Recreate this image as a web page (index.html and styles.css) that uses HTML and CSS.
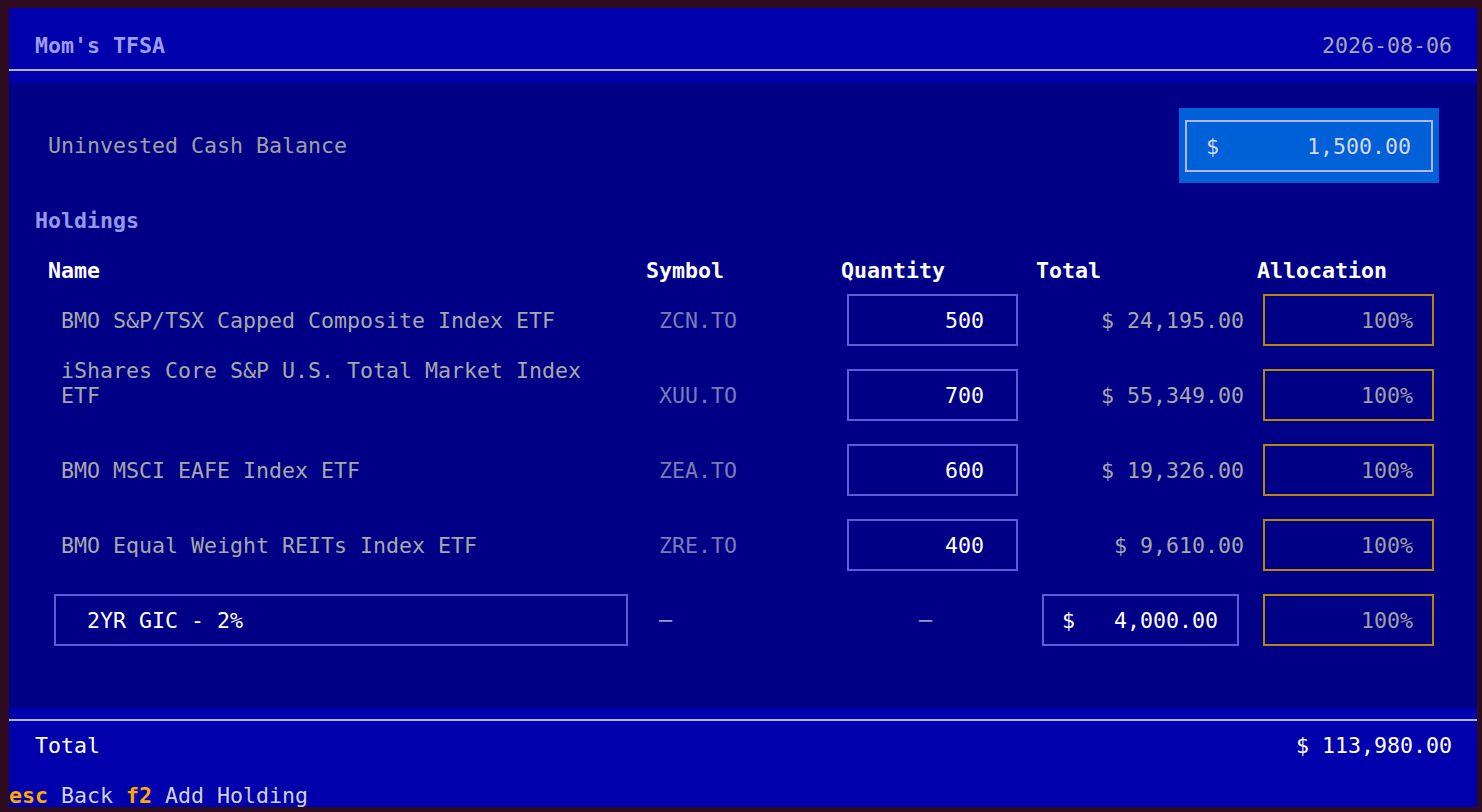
FILE: index.html
```html
<!DOCTYPE html>
<html>
<head>
<meta charset="utf-8">
<title>Mom's TFSA</title>
<link rel="stylesheet" href="styles.css">
</head>
<body>
<div class="app">
  <div class="top">
    <div class="bar-row">
      <span class="title">Mom's TFSA</span>
      <span class="date">2026-08-06</span>
    </div>
    <div class="rule"></div>
  </div>

  <div class="main">
    <div class="cash">
      <span class="cash-label">Uninvested Cash Balance</span>
      <div class="cash-field">
        <div class="box box-cash"><span>$</span><span>1,500.00</span></div>
      </div>
    </div>

    <div class="section">Holdings</div>

    <div class="table">
      <div class="row head">
        <div>Name</div>
        <div>Symbol</div>
        <div>Quantity</div>
        <div>Total</div>
        <div>Allocation</div>
      </div>

      <div class="row">
        <div class="c-name">BMO S&amp;P/TSX Capped Composite Index ETF</div>
        <div class="c-sym">ZCN.TO</div>
        <div><div class="box box-qty">500</div></div>
        <div class="c-total">$ 24,195.00</div>
        <div><div class="box box-alloc">100%</div></div>
      </div>

      <div class="row">
        <div class="c-name two-line">iShares Core S&amp;P U.S. Total Market Index ETF</div>
        <div class="c-sym">XUU.TO</div>
        <div><div class="box box-qty">700</div></div>
        <div class="c-total">$ 55,349.00</div>
        <div><div class="box box-alloc">100%</div></div>
      </div>

      <div class="row">
        <div class="c-name">BMO MSCI EAFE Index ETF</div>
        <div class="c-sym">ZEA.TO</div>
        <div><div class="box box-qty">600</div></div>
        <div class="c-total">$ 19,326.00</div>
        <div><div class="box box-alloc">100%</div></div>
      </div>

      <div class="row">
        <div class="c-name">BMO Equal Weight REITs Index ETF</div>
        <div class="c-sym">ZRE.TO</div>
        <div><div class="box box-qty">400</div></div>
        <div class="c-total">$ 9,610.00</div>
        <div><div class="box box-alloc">100%</div></div>
      </div>

      <!-- cash-like holding: name and total are editable -->
      <div class="row">
        <div><div class="box box-name">2YR GIC - 2%</div></div>
        <div class="c-sym c-dash">─</div>
        <div class="c-dash c-dash-qty">─</div>
        <div><div class="box box-money"><span>$</span><span>4,000.00</span></div></div>
        <div><div class="box box-alloc">100%</div></div>
      </div>
    </div>
  </div>

  <div class="bottom">
    <div class="rule"></div>
    <div class="bar-row sum">
      <span>Total</span>
      <span>$ 113,980.00</span>
    </div>
    <div class="blank"></div>
    <div class="keys"><b class="key">esc</b> Back <b class="key">f2</b> Add Holding</div>
  </div>
</div>
</body>
</html>
```

FILE: styles.css
```css
*{box-sizing:border-box;}
html,body{margin:0;height:812px;overflow:hidden;}
body{background:#2e0b1e;font-family:"DejaVu Sans Mono","Liberation Mono",monospace;font-size:21.6px;line-height:25px;color:#a8a8a8;padding:8px 0 0 9px;}

.app {width:1468px;height:799px;display:flex;flex-direction:column;overflow:hidden;}

/* title bar and footer share the lighter blue */
.top {background:#0000ad;padding-top:25px;height:75px;flex:none;}
.bottom {background:#0000ad;height:99px;flex:none;}
.bar-row {display:flex;justify-content:space-between;height:25px;padding:0 25px 0 26px;}
.title {color:#9c9cf0;font-weight:bold;}
.date {color:#a8a8b4;}
.rule {height:2px;margin:11px 0 12px;background:#b4b4ff;}

.main {flex:1;background:#000087;padding-top:25px;}

.cash {display:flex;justify-content:space-between;align-items:center;height:75px;padding:0 38px 0 39px;}
.cash-label {color:#a0a0a0;}
.cash-field {width:260px;height:75px;background:#0060d8;padding:12px 6px 11px;}

.section {height:25px;margin:25px 0;padding-left:26px;color:#9898e8;font-weight:bold;}

.table {padding-left:39px;}
.row {display:grid;grid-template-columns:598px 195px 195px 221px 183px;height:75px;}
.row.head {height:25px;color:#fff;font-weight:bold;}

.c-name {padding:25px 39px 0 13px;}
.c-name.two-line {padding-top:0;}
.c-sym {padding:25px 13px 0;color:#7c7cb4;}
.c-total {padding:25px 13px 0;text-align:right;white-space:pre;}
.c-dash {color:#9a9ac4;}
.c-dash-qty {padding:25px 0 0 78px;}

/* bordered input fields */
.box {display:flex;align-items:center;height:52px;margin:11px 0 0 6px;border:2px solid #5c5cd8;color:#fff;}
.box-cash {height:52px;margin:0;border-color:#b4b4ff;color:#d8d8e8;justify-content:space-between;padding:0 20px 0 19px;}
.box-qty {width:171px;justify-content:flex-end;padding-right:32px;}
.box-alloc {width:171px;justify-content:flex-end;padding-right:19px;border-color:#b8860b;color:#a0a0a0;}
.box-name {width:574px;padding-left:31px;white-space:pre;}
.box-money {width:197px;justify-content:space-between;padding:0 19px 0 18px;}

.sum {color:#fff;}
.blank {height:25px;}
.keys {height:24px;color:#d0d0d8;white-space:pre;}
.key {color:#ffa800;}
```
